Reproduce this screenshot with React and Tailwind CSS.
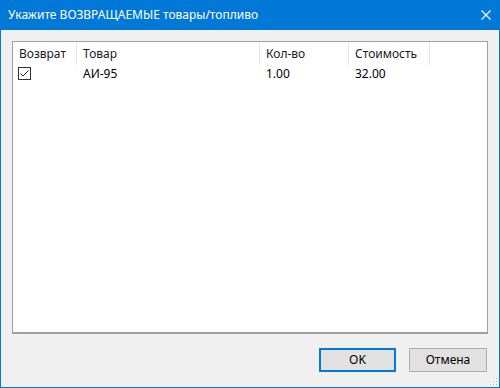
import React from 'react';

const cols = [
  { label: 'Возврат', w: 'w-[64px]' },
  { label: 'Товар', w: 'w-[183px]' },
  { label: 'Кол-во', w: 'w-[89px]' },
  { label: 'Стоимость', w: 'w-[81px]' },
];

function CheckBox() {
  return (
    <div className="w-[13px] h-[13px] border border-[#333] bg-white flex items-center justify-center">
      <svg width="11" height="11" viewBox="0 0 11 11">
        <path d="M1.5 5.5 L4 8 L9.5 2.5" fill="none" stroke="#222" strokeWidth="1" />
      </svg>
    </div>
  );
}

export default function App() {
  return (
    <div
      className="w-[500px] h-[388px] flex flex-col bg-[#0078d7] text-[12px] text-black"
      style={{ fontFamily: '"Noto Sans", "Open Sans", sans-serif' }}
    >
      {/* title bar */}
      <div className="h-[30px] flex items-center justify-between pl-[8px] pr-[8px] text-white shrink-0">
        <span className="leading-none">Укажите ВОЗВРАЩАЕМЫЕ товары/топливо</span>
        <svg width="10" height="10" viewBox="0 0 10 10" className="mr-[1px]">
          <path d="M0.5 0.5 L9.5 9.5 M9.5 0.5 L0.5 9.5" stroke="white" strokeWidth="1.1" />
        </svg>
      </div>

      {/* client area */}
      <div className="flex-1 mx-[1px] mb-[1px] bg-[#f0f0f0] flex flex-col pt-[11px] px-[11px] relative">
        <div className="h-[293px] border border-[#a0a0a0] border-b-2 bg-white">
          <div className="flex h-[23px] items-center">
            {cols.map((c, i) => (
              <div
                key={i}
                className={`${c.w} h-full flex items-center pl-[6px] border-r border-[#e5e5e5] text-[#1a1a1a]`}
              >
                {c.label}
              </div>
            ))}
          </div>
          <div className="flex h-[17px] items-center">
            <div className="w-[64px] pl-[5px] flex items-center">
              <CheckBox />
            </div>
            <div className="w-[183px] pl-[6px]">АИ-95</div>
            <div className="w-[89px] pl-[6px]">1.00</div>
            <div className="w-[81px] pl-[6px]">32.00</div>
          </div>
        </div>

        <div className="flex justify-end gap-[13px] mt-[14px] pr-[1px]">
          <button className="w-[77px] h-[24px] bg-[#e1e1e1] border-2 border-[#0078d7] flex items-center justify-center">
            OK
          </button>
          <button className="w-[78px] h-[24px] bg-[#e1e1e1] border border-[#adadad] flex items-center justify-center">
            Отмена
          </button>
        </div>

        {/* size grip */}
        <svg width="10" height="10" viewBox="0 0 10 10" className="absolute right-[1px] bottom-[1px]">
          {[[8, 2], [8, 5], [5, 5], [8, 8], [5, 8], [2, 8]].map(([x, y], i) => (
            <rect key={i} x={x} y={y} width="1" height="1" fill="#bcbcbc" />
          ))}
        </svg>
      </div>
    </div>
  );
}
